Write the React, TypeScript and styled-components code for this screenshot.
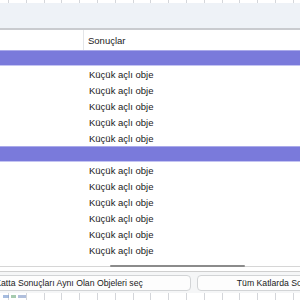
import React from 'react'
import styled, { createGlobalStyle } from 'styled-components'

const GlobalStyle = createGlobalStyle`
  html, body {
    margin: 0;
    padding: 0;
    background: #ffffff;
  }
  body {
    font-family: 'Liberation Sans', Arial, sans-serif;
  }
`

const StyledFrame = styled.div`
  width: 300px;
  height: 300px;
  overflow: hidden;
  display: flex;
  flex-direction: column;
  background: #ffffff;
`
const StyledRuler = styled.div<{ h: number }>`
  height: ${p => p.h}px;
  flex: none;
  background-color: #ffffff;
  background-image: repeating-linear-gradient(
    to right,
    transparent 0,
    transparent 8px,
    #d4d6da 8px,
    #d4d6da 9px,
    transparent 9px,
    transparent 17.8px
  );
`
const StyledToolbar = styled.div`
  height: 25px;
  flex: none;
  background: #eef2f7;
  border-bottom: 2px solid #c9cbcf;
`
const StyledHeader = styled.div`
  height: 20px;
  flex: none;
  display: grid;
  grid-template-columns: 84px 1fr;
  font-size: 9.5px;
  color: #1a1a1a;
`
const StyledHeadCell = styled.div<{ last?: boolean }>`
  display: flex;
  align-items: center;
  padding-left: 4px;
  border-right: ${p => (p.last ? 'none' : '1px solid #e3e5e8')};
`
const StyledGroup = styled.div`
  height: 14px;
  flex: none;
  background: #7a7adb;
  border-top: 1px solid #aaaaea;
  border-bottom: 1px solid #c4c4f2;
`
const StyledRow = styled.div`
  height: 16px;
  flex: none;
  display: grid;
  grid-template-columns: 85px 1fr;
  align-items: center;
  font-size: 9.5px;
  color: #1a1a1a;
`
const StyledCell = styled.div`
  padding-left: 4px;
  white-space: nowrap;
`
const StyledGap = styled.div`
  height: 5px;
  flex: none;
`
const StyledScroll = styled.div`
  height: 6px;
  flex: none;
  display: flex;
  align-items: center;
`
const StyledTrack = styled.div`
  flex: 1;
  height: 1px;
  background: #d6d6d6;
  display: flex;
  align-items: center;
  padding-left: 110px;
  padding-right: 55px;
`
const StyledThumb = styled.div`
  flex: 1;
  height: 2px;
  background: #8b8b8b;
  border-radius: 1px;
`
const StyledButtonBar = styled.div`
  height: 21px;
  flex: none;
  margin-top: 2px;
  border-top: 1px solid #cfcfcf;
  background: #f5f6f7;
  display: flex;
  align-items: center;
  gap: 6px;
  overflow: hidden;
`
const StyledButton = styled.button<{ w: number; shift?: number }>`
  flex: none;
  width: ${p => p.w}px;
  margin-left: ${p => p.shift || 0}px;
  height: 16px;
  padding: 0;
  background: #fdfdfd;
  border: 1px solid #d2d4d6;
  border-radius: 4px;
  font-family: 'Liberation Sans', Arial, sans-serif;
  font-size: 8.7px;
  color: #1a1a1a;
  text-align: center;
  white-space: nowrap;
  overflow: hidden;
`
const StyledStatus = styled(StyledRuler)`
  display: flex;
  align-items: center;
  gap: 2px;
  padding-left: 3px;
`
const StyledMark = styled.span<{ c: string; w: number }>`
  display: block;
  width: ${p => p.w}px;
  height: 3px;
  background: ${p => p.c};
  opacity: 0.6;
`

const groups = [5, 6]
const itemText = 'Küçük açlı obje'

export default function App() {
  return (
    <StyledFrame>
      <GlobalStyle />
      <StyledRuler h={3} />
      <StyledToolbar />
      <StyledHeader>
        <StyledHeadCell />
        <StyledHeadCell last>Sonuçlar</StyledHeadCell>
      </StyledHeader>
      {groups.map((count, g) => (
        <React.Fragment key={g}>
          <StyledGroup />
          {Array.from({ length: count }).map((_, i) => (
            <StyledRow key={i}>
              <StyledCell />
              <StyledCell>{itemText}</StyledCell>
            </StyledRow>
          ))}
        </React.Fragment>
      ))}
      <StyledGap />
      <StyledScroll>
        <StyledTrack>
          <StyledThumb />
        </StyledTrack>
      </StyledScroll>
      <StyledButtonBar>
        <StyledButton w={257} shift={-66}>
          Bu Katta Sonuçları Aynı Olan Objeleri seç
        </StyledButton>
        <StyledButton w={259}>
          Tüm Katlarda Sonuçları Aynı Olan Objeleri seç
        </StyledButton>
      </StyledButtonBar>
      <StyledStatus h={7}>
        <StyledMark c="#6a8fc9" w={6} />
        <StyledMark c="#6aa87a" w={5} />
        <StyledMark c="#7c95c4" w={8} />
      </StyledStatus>
    </StyledFrame>
  )
}
